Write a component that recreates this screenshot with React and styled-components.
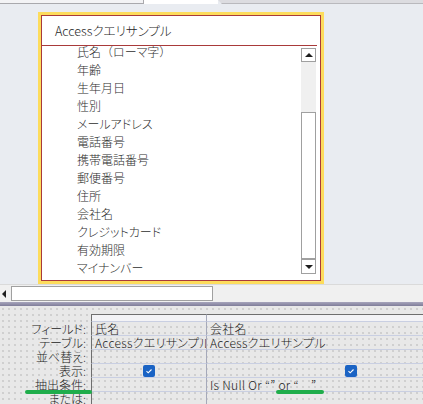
import React from "react";
import styled, { createGlobalStyle } from "styled-components";

const GlobalStyle = createGlobalStyle`
  html, body { margin: 0; padding: 0; }
  body {
    width: 423px;
    height: 404px;
    overflow: hidden;
    font-family: "Noto Sans CJK JP", "Noto Sans", sans-serif;
    font-feature-settings: "palt";
    font-weight: 300;
  }
  * { box-sizing: border-box; }
`;

const Screen = styled.div`
  width: 423px;
  height: 404px;
  display: flex;
  flex-direction: column;
  background: #e9ecf1;
  overflow: hidden;
`;

const TabStrip = styled.div`
  height: 4px;
  flex-shrink: 0;
  display: flex;
`;

const InactiveTab = styled.div`
  width: 144px;
  background: #f3f3f5;
  border-bottom: 1px solid #a9a9ad;
  border-right: 1px solid #a9a9ad;
`;

const ActiveTab = styled.div`
  width: 74px;
  background: #ffffff;
`;

const RestTab = styled.div`
  flex: 1;
  background: #dcdce0;
  border-bottom: 1px solid #b9b9bd;
  clip-path: polygon(0 0, 100% 0, 100% 100%, 4px 100%);
`;

const DesignArea = styled.div`
  flex: 1;
  padding: 8px 0 0 38px;
`;

const TableFrame = styled.div`
  width: 286px;
  height: 272px;
  border: 3px solid #fddc5c;
  display: flex;
`;

const TableBox = styled.div`
  flex: 1;
  display: flex;
  flex-direction: column;
  background: #ffffff;
  border: 1px solid #a93a3a;
`;

const TableTitle = styled.div`
  height: 30px;
  flex-shrink: 0;
  margin-right: 3px;
  padding-left: 13px;
  display: flex;
  align-items: center;
  border-bottom: 1px solid #a93a3a;
  font-size: 12.5px;
  color: #1e1e1e;
`;

const ListArea = styled.div`
  flex: 1;
  display: flex;
  overflow: hidden;
`;

const FieldList = styled.div`
  flex: 1;
  overflow: hidden;
`;

const FieldInner = styled.div`
  margin-top: -3px;
`;

const FieldItem = styled.div`
  height: 18px;
  line-height: 18px;
  padding-left: 35px;
  font-size: 12px;
  color: #2e2e2e;
  white-space: nowrap;
`;

const FullWidth = styled.span`
  font-feature-settings: normal;
`;

const VScroll = styled.div`
  width: 15px;
  margin: 2px 4px 6px 0;
  display: flex;
  flex-direction: column;
`;

const ScrollButton = styled.div`
  height: ${(p) => p.$h}px;
  flex-shrink: 0;
  border: 1px solid #a0a0a0;
  background: #ffffff;
  display: flex;
  align-items: center;
  justify-content: center;
`;

const Arrow = styled.div`
  width: 0;
  height: 0;
  border-left: 4px solid transparent;
  border-right: 4px solid transparent;
  ${(p) =>
    p.$dir === "up"
      ? "border-bottom: 4px solid #1e1e1e;"
      : "border-top: 4px solid #1e1e1e;"}
`;

const ScrollTrack = styled.div`
  height: ${(p) => p.$h}px;
  flex-shrink: 0;
  background: #f0f0f0;
`;

const ScrollThumb = styled.div`
  height: ${(p) => p.$h}px;
  flex-shrink: 0;
  border: 1px solid #a0a0a0;
  background: #ffffff;
`;

const HScrollBand = styled.div`
  height: 18px;
  flex-shrink: 0;
  background: #f0f0f0;
  border-top: 1px solid #dadada;
  display: flex;
  align-items: center;
`;

const LeftArrow = styled.div`
  width: 0;
  height: 0;
  margin-left: 2px;
  border-top: 4px solid transparent;
  border-bottom: 4px solid transparent;
  border-right: 4px solid #1e1e1e;
`;

const HThumb = styled.div`
  margin-left: 5px;
  width: 202px;
  height: 15px;
  border: 1px solid #a0a0a0;
  background: #ffffff;
`;

const Splitter = styled.div`
  height: 4px;
  flex-shrink: 0;
  background: linear-gradient(#a7a5bc, #7f7d99);
`;

const LowerPane = styled.div`
  flex: 1;
  position: relative;
  padding-top: 8px;
  background-color: #e8e8e8;
  background-image: radial-gradient(circle, #cfcfcf 0.7px, transparent 0.9px);
  background-size: 6px 6px;
  overflow: hidden;
`;

const QueryGrid = styled.div`
  display: grid;
  grid-template-columns: 91px 116px 288px;
  grid-template-rows: 8px repeat(6, 14px);
  width: 495px;
  font-size: 12px;
  color: #222222;
`;

const Label = styled.div`
  text-align: right;
  padding-right: 5px;
  line-height: 14px;
  white-space: nowrap;
`;

const HeaderCell = styled.div`
  background: #f3f3f6;
  border-top: 1px solid #6e6e6e;
  border-bottom: 1px solid #c9cfe2;
  border-left: ${(p) => (p.$first ? "1px solid #6e6e6e" : "none")};
  border-right: 1px solid #a5a9ba;
`;

const Cell = styled.div`
  border-bottom: 1px solid #c9cfe2;
  border-left: ${(p) => (p.$first ? "1px solid #6e6e6e" : "none")};
  border-right: 1px solid #a5a9ba;
  padding-left: 3px;
  line-height: 13px;
  letter-spacing: 0.3px;
  white-space: nowrap;
  overflow: hidden;
  display: flex;
  align-items: center;
  justify-content: ${(p) => (p.$center ? "center" : "flex-start")};
`;

const CheckBox = styled.div`
  width: 12px;
  height: 12px;
  border-radius: 2px;
  background: #1a63c4;
  display: flex;
  align-items: center;
  justify-content: center;
  margin-left: -3px;
`;

const GreenMark = styled.div`
  position: absolute;
  top: 84px;
  height: 4px;
  border-radius: 2px;
  background: #1fad4b;
`;

const fields = [
  <>
    氏名<FullWidth>（</FullWidth>ローマ字<FullWidth>）</FullWidth>
  </>,
  "年齢",
  "生年月日",
  "性別",
  "メールアドレス",
  "電話番号",
  "携帯電話番号",
  "郵便番号",
  "住所",
  "会社名",
  "クレジットカード",
  "有効期限",
  "マイナンバー",
];

const Check = () => (
  <CheckBox>
    <svg width="8" height="8" viewBox="0 0 8 8">
      <polyline points="1.5,4.2 3.2,5.8 6.5,2.5" fill="none" stroke="#ffffff" strokeWidth="1.1" />
    </svg>
  </CheckBox>
);

const rows = [
  { label: "フィールド:", a: "氏名", b: "会社名" },
  { label: "テーブル:", a: "Accessクエリサンプル", b: "Accessクエリサンプル" },
  { label: "並べ替え:", a: "", b: "" },
  { label: "表示:", check: true },
  { label: "抽出条件:", a: "", b: "Is Null Or “” or “　”" },
  { label: "または:", a: "", b: "" },
];

export default function App() {
  return (
    <Screen>
      <GlobalStyle />
      <TabStrip>
        <InactiveTab />
        <ActiveTab />
        <RestTab />
      </TabStrip>
      <DesignArea>
        <TableFrame>
          <TableBox>
            <TableTitle>Accessクエリサンプル</TableTitle>
            <ListArea>
              <FieldList>
                <FieldInner>
                  {fields.map((f, i) => (
                    <FieldItem key={i}>{f}</FieldItem>
                  ))}
                </FieldInner>
              </FieldList>
              <VScroll>
                <ScrollButton $h={14}>
                  <Arrow $dir="up" />
                </ScrollButton>
                <ScrollTrack $h={50} />
                <ScrollThumb $h={147} />
                <ScrollButton $h={15}>
                  <Arrow $dir="down" />
                </ScrollButton>
              </VScroll>
            </ListArea>
          </TableBox>
        </TableFrame>
      </DesignArea>
      <HScrollBand>
        <LeftArrow />
        <HThumb />
      </HScrollBand>
      <Splitter />
      <LowerPane>
        <QueryGrid>
          <div />
          <HeaderCell $first />
          <HeaderCell />
          {rows.map((r) => (
            <React.Fragment key={r.label}>
              <Label>{r.label}</Label>
              {r.check ? (
                <>
                  <Cell $first $center>
                    <Check />
                  </Cell>
                  <Cell $center>
                    <Check />
                  </Cell>
                </>
              ) : (
                <>
                  <Cell $first>{r.a}</Cell>
                  <Cell>{r.b}</Cell>
                </>
              )}
            </React.Fragment>
          ))}
        </QueryGrid>
        <GreenMark style={{ left: 25, width: 67 }} />
        <GreenMark style={{ left: 276, width: 48 }} />
      </LowerPane>
    </Screen>
  );
}
